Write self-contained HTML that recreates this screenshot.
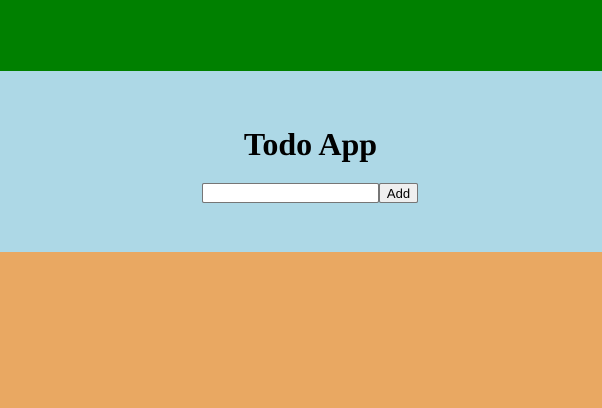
<!DOCTYPE html>
<html><head><style>
html,body{margin:0;padding:0;width:602px;height:408px;overflow:hidden}
.g{height:71px;background:#008000}
.b{height:181px;background:#add8e6;text-align:center;position:relative}
.o{height:156px;background:#e9a862}
h1{margin:0;position:absolute;left:19px;right:0;font:bold 32px "Liberation Serif",serif;line-height:37px;}
.row{position:absolute;top:112px;left:202px;display:flex;height:20px}
input{box-sizing:border-box;width:177px;height:20px;border:1px solid #767676;border-radius:2px;margin:0;padding:0;background:#fff}
button{box-sizing:border-box;width:39px;height:20px;margin:0;padding:0;font:13px "Liberation Sans",sans-serif;background:#efefef;border:1px solid #767676;border-radius:2px;color:#000}
</style></head><body>
<div class="g"></div>
<div class="b"><h1 style="top:55px">Todo App</h1><div class="row"><input><button>Add</button></div></div>
<div class="o"></div>
</body></html>
